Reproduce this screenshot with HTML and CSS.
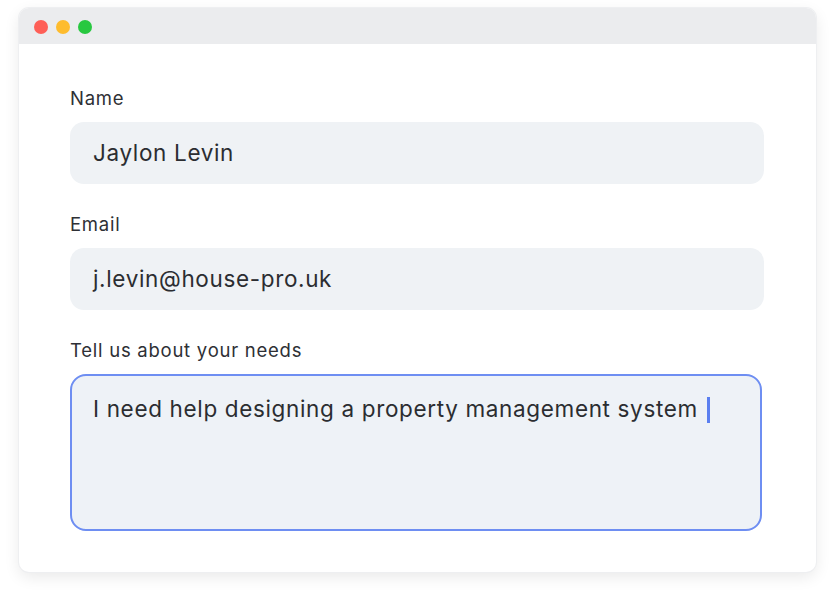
FILE: index.html
```html
<!DOCTYPE html>
<html>
<head lang="en">
    <meta charset="UTF-8">
    <title>Contact form</title>
    <link rel="stylesheet" href="styles.css">
</head>
<body>
<div id="window">
    <div class="titlebar">
        <span class="dot red"></span>
        <span class="dot yellow"></span>
        <span class="dot green"></span>
    </div>
    <form class="form">
        <label class="label">Name</label>
        <div class="field">Jaylon Levin</div>
        <label class="label">Email</label>
        <div class="field">j.levin@house-pro.uk</div>
        <label class="label">Tell us about your needs</label>
        <div class="field area">I need help designing a property management system <span class="caret"></span></div>
    </form>
</div>
</body>
</html>
```

FILE: styles.css
```css
*{
    margin: 0;
    padding: 0;
    box-sizing: border-box;
}
body{
    background: #ffffff;
    font-family: Inter, "Noto Sans", sans-serif;
    color: #2b2d31;
    padding: 8px 18px 26px 19px;
}
#window{
    width: 797px;
    height: 564px;
    background: #ffffff;
    border-radius: 10px;
    overflow: hidden;
    box-shadow: 0 0 0 1px #eeeff1, 0 5px 16px rgba(0,0,0,0.09);
}
.titlebar{
    height: 36px;
    background: #ebecee;
    display: flex;
    align-items: center;
    gap: 8px;
    padding-left: 15px;
    padding-top: 1px;
}
.dot{
    width: 14px;
    height: 14px;
    border-radius: 50%;
}
.red{ background: #fe5f57; }
.yellow{ background: #febc2e; }
.green{ background: #28c840; }
.form{
    display: flex;
    flex-direction: column;
    padding: 42px 0 0 51px;
    width: 745px;
}
.label{
    font-size: 18.5px;
    line-height: 24px;
    letter-spacing: 0.75px;
    color: #2e3035;
    margin-bottom: 12px;
}
.field{
    height: 62px;
    background: #eff2f5;
    border-radius: 14px;
    font-size: 22.5px;
    letter-spacing: 0.65px;
    line-height: 62px;
    padding-left: 23px;
    margin-bottom: 28px;
    color: #2b2d31;
}
.area{
    height: 157px;
    width: 692px;
    line-height: 30px;
    padding-top: 18px;
    padding-left: 21px;
    border: 2px solid #6e8ef2;
    border-radius: 16px;
    background: #eef2f7;
}
.caret{
    display: inline-block;
    width: 3px;
    height: 26px;
    background: #5b7ff0;
    vertical-align: -6px;
    margin-left: 2px;
}
```
